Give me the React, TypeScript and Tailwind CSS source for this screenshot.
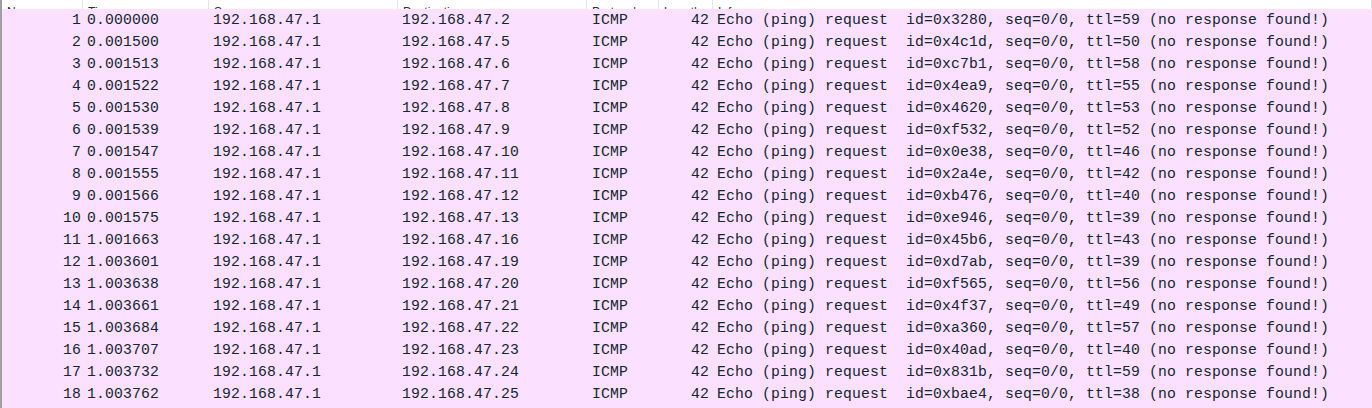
import React from "react";

const rows: [number, string, string, string, string][] = [
  [1, "0.000000", "192.168.47.2", "0x3280", "59"],
  [2, "0.001500", "192.168.47.5", "0x4c1d", "50"],
  [3, "0.001513", "192.168.47.6", "0xc7b1", "58"],
  [4, "0.001522", "192.168.47.7", "0x4ea9", "55"],
  [5, "0.001530", "192.168.47.8", "0x4620", "53"],
  [6, "0.001539", "192.168.47.9", "0xf532", "52"],
  [7, "0.001547", "192.168.47.10", "0x0e38", "46"],
  [8, "0.001555", "192.168.47.11", "0x2a4e", "42"],
  [9, "0.001566", "192.168.47.12", "0xb476", "40"],
  [10, "0.001575", "192.168.47.13", "0xe946", "39"],
  [11, "1.001663", "192.168.47.16", "0x45b6", "43"],
  [12, "1.003601", "192.168.47.19", "0xd7ab", "39"],
  [13, "1.003638", "192.168.47.20", "0xf565", "56"],
  [14, "1.003661", "192.168.47.21", "0x4f37", "49"],
  [15, "1.003684", "192.168.47.22", "0xa360", "57"],
  [16, "1.003707", "192.168.47.23", "0x40ad", "40"],
  [17, "1.003732", "192.168.47.24", "0x831b", "59"],
  [18, "1.003762", "192.168.47.25", "0xbae4", "38"],
];

const headers = [
  { t: "No.", w: "w-[81px]" },
  { t: "Time", w: "w-[126px]" },
  { t: "Source", w: "w-[189px]" },
  { t: "Destination", w: "w-[189px]" },
  { t: "Protocol", w: "w-[72px]" },
  { t: "Length", w: "w-[54px]" },
  { t: "Info", w: "flex-1" },
];

export default function App() {
  return (
    <div className="w-[1372px] h-[408px] overflow-hidden bg-white flex">
      <div className="w-[2px] bg-[#a0a0a0] shrink-0" />
      <div className="flex-1 flex flex-col">
        <div className="h-[9px] overflow-hidden flex bg-white">
          {headers.map((h, i) => (
            <div
              key={i}
              className={`${h.w} h-[9px] shrink-0 border-r border-[#e5e5e5] px-[5px] flex items-end overflow-hidden`}
            >
              <span className="text-[12px] leading-[12px] -mb-[9px] text-[#333] font-['Liberation_Sans',sans-serif]">
                {h.t}
              </span>
            </div>
          ))}
        </div>
        <div className="flex-1 bg-[#fce0ff] font-['Liberation_Mono',monospace] text-[14.75px] tracking-[0.15px] text-[#12272e] whitespace-pre">
          {rows.map(([n, t, dst, id, ttl]) => (
            <div key={n} className="flex h-[22px] items-center leading-[22px]">
              <div className="w-[81px] shrink-0 text-right pr-[2px]">{n}</div>
              <div className="w-[126px] shrink-0 pl-[4px]">{t}</div>
              <div className="w-[189px] shrink-0 pl-[4px]">192.168.47.1</div>
              <div className="w-[189px] shrink-0 pl-[4px]">{dst}</div>
              <div className="w-[72px] shrink-0 pl-[5px]">ICMP</div>
              <div className="w-[54px] shrink-0 text-right pr-[4px]">42</div>
              <div className="flex-1 pl-[4px]">
                {`Echo (ping) request  id=${id}, seq=0/0, ttl=${ttl} (no response found!)`}
              </div>
            </div>
          ))}
        </div>
      </div>
    </div>
  );
}
